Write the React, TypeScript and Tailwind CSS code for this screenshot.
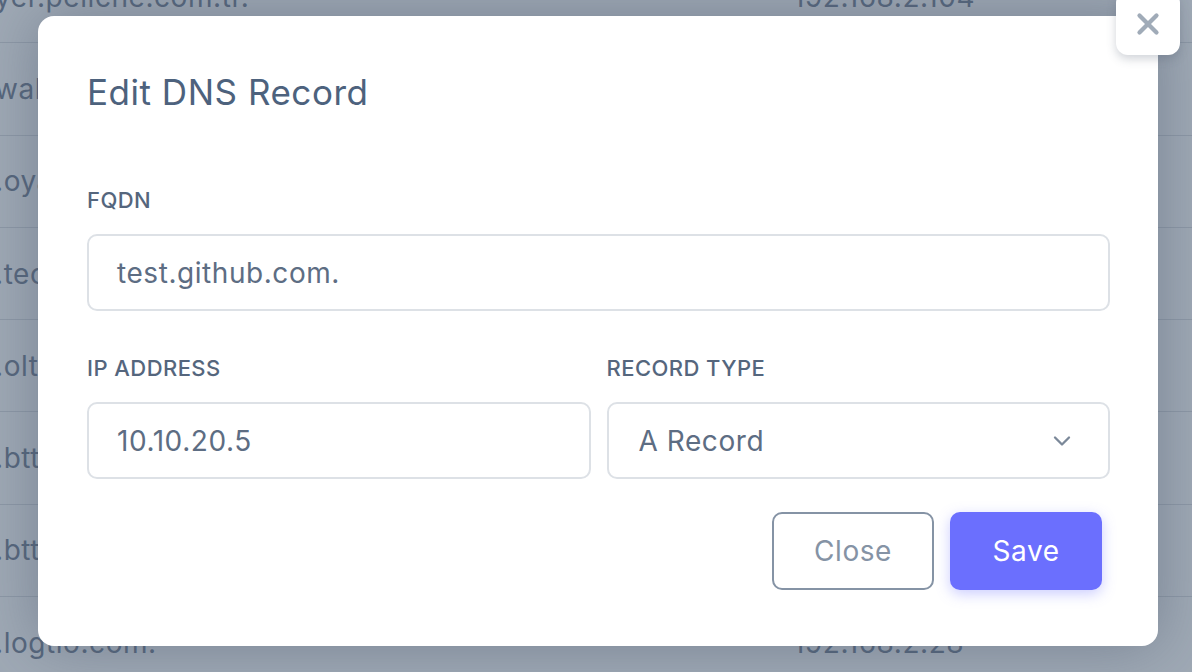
import { ChevronDown, X } from 'lucide-react';

const rows = [
  { name: 'yer.peliche.com.tr.', ip: '192.168.2.104' },
  { name: 'wallet.peliche.com.', ip: '192.168.2.51' },
  { name: '.oyak.com.', ip: '192.168.2.12' },
  { name: '.tech.com.', ip: '192.168.2.17' },
  { name: '.olt.com.', ip: '192.168.2.40' },
  { name: '.btt.com.', ip: '192.168.2.41' },
  { name: '.btt.com.', ip: '192.168.2.42' },
  { name: '.logtio.com.', ip: '192.168.2.28' },
];

function Field({ label, children }: { label: string; children: React.ReactNode }) {
  return (
    <div className="flex flex-col">
      <span className="text-[22px] font-medium leading-none tracking-[0.02em] text-[#55667d] uppercase">{label}</span>
      <div className="mt-[23px]">{children}</div>
    </div>
  );
}

export default function App() {
  return (
    <div
      className="relative w-[1192px] h-[672px] overflow-hidden bg-[#9fa9b5]"
      style={{ fontFamily: 'Inter, "Noto Sans", sans-serif' }}
    >
      {/* table behind the dialog */}
      <div className="flex flex-col -mt-[49px] -ml-[5px]">
        {rows.map((row, i) => (
          <div
            key={i}
            className="flex items-center h-[92.3px] border-b border-[#8d98a6] text-[28px] tracking-[0.02em] text-[#56667c]"
          >
            <span className="w-[798px] shrink-0 whitespace-nowrap">{row.name}</span>
            <span className="whitespace-nowrap">{row.ip}</span>
          </div>
        ))}
      </div>

      {/* overlay + dialog */}
      <div className="absolute inset-0 pt-[16px] pl-[38px]">
        <div className="relative w-[1120px] h-[630px] rounded-[16px] bg-white shadow-[0_0_60px_rgba(71,85,105,0.45)] pl-[49px] pr-[48px] pt-[59px]">
          <button
            type="button"
            className="absolute -top-[25px] -right-[22px] w-[64px] h-[64px] rounded-[12px] bg-white flex items-center justify-center shadow-[0_4px_10px_rgba(71,85,105,0.25)]"
          >
            <X className="w-[34px] h-[34px] mt-[2px] text-[#a0abb8]" strokeWidth={3} />
          </button>

          <h2 className="text-[35px] leading-none font-normal tracking-[0.015em] text-[#4d627d]">Edit DNS Record</h2>

          <div className="mt-[79px]">
            <Field label="FQDN">
              <div className="h-[77px] rounded-[10px] border-2 border-[#dde1e6] flex items-center px-[28px] text-[28px] tracking-[0.02em] text-[#5d6d83]">
                test.github.com.
              </div>
            </Field>
          </div>

          <div className="mt-[46px] grid grid-cols-2 gap-x-[16px]">
            <Field label="IP Address">
              <div className="h-[77px] rounded-[10px] border-2 border-[#dde1e6] flex items-center px-[28px] text-[28px] tracking-[0.02em] text-[#5d6d83]">
                10.10.20.5
              </div>
            </Field>
            <Field label="Record Type">
              <div className="h-[77px] rounded-[10px] border-2 border-[#dde1e6] flex items-center justify-between pl-[30px] pr-[32px] text-[28px] tracking-[0.02em] text-[#5d6d83]">
                <span>A Record</span>
                <ChevronDown className="w-[28px] h-[28px] text-[#7b8899]" strokeWidth={2} />
              </div>
            </Field>
          </div>

          <div className="mt-[33px] flex justify-end gap-[16px] pr-[8px]">
            <button
              type="button"
              className="w-[162px] h-[78px] rounded-[10px] border-2 border-[#8593a5] text-[28px] tracking-[0.02em] text-[#8593a5]"
            >
              Close
            </button>
            <button
              type="button"
              className="w-[152px] h-[78px] rounded-[10px] bg-[#6b6ffe] text-[28px] tracking-[0.02em] text-white shadow-[0_4px_14px_rgba(107,111,254,0.35)]"
            >
              Save
            </button>
          </div>
        </div>
      </div>
    </div>
  );
}
